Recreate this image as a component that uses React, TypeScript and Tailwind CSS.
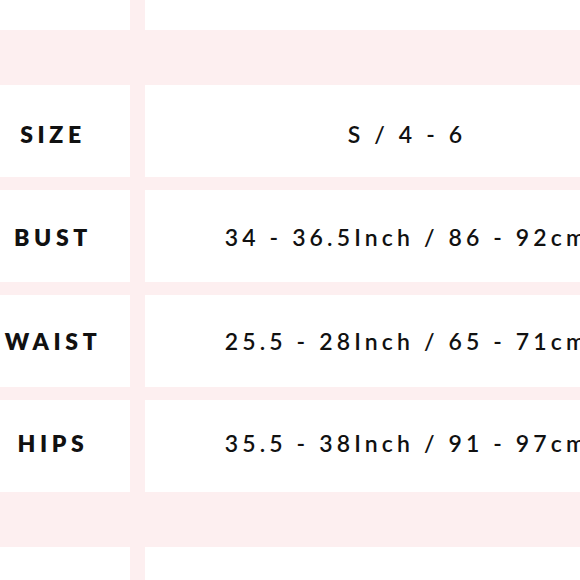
import React from "react";

const rows = [
  { label: "SIZE", value: "S / 4 - 6", pad: "pt-[7px]" },
  { label: "BUST", value: "34 - 36.5Inch / 86 - 92cm", pad: "pt-[2px]" },
  { label: "WAIST", value: "25.5 - 28Inch / 65 - 71cm", pad: "pt-0" },
  { label: "HIPS", value: "35.5 - 38Inch / 91 - 97cm", pad: "pb-[6px]" },
];

function Row({ h, label, value, pad = "" }: { h: string; label?: string; value?: string; pad?: string }) {
  return (
    <div className={`flex shrink-0 gap-[15px] ${h}`}>
      <div className={`w-[130px] shrink-0 bg-white flex items-center justify-center pr-[24px] ${pad}`}>
        {label && (
          <span className="text-[23px] font-extrabold tracking-[0.2em] text-[#111] whitespace-nowrap">
            {label}
          </span>
        )}
      </div>
      <div className={`w-[524px] shrink-0 bg-white flex items-center justify-center ${pad}`}>
        {value && (
          <span className="text-[23px] font-semibold tracking-[0.18em] text-[#111] whitespace-nowrap">
            {value}
          </span>
        )}
      </div>
    </div>
  );
}

export default function App() {
  return (
    <div
      className="w-[580px] h-[580px] overflow-hidden bg-[#fdeff0] flex flex-col"
      style={{ fontFamily: "Lato, 'Open Sans', sans-serif" }}
    >
      <Row h="h-[30px]" />
      <div className="h-[55px] shrink-0" />
      <div className="flex shrink-0 flex-col gap-[13px]">
        {rows.map((r) => (
          <Row key={r.label} h="h-[92px]" label={r.label} value={r.value} pad={r.pad} />
        ))}
      </div>
      <div className="h-[55px] shrink-0" />
      <Row h="h-[40px]" />
    </div>
  );
}
